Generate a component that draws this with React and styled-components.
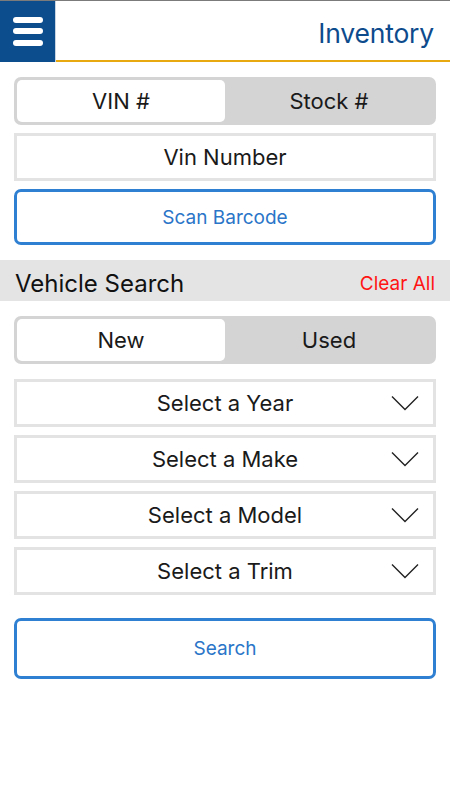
import React, { useState } from "react";
import styled, { createGlobalStyle } from "styled-components";

const Global = createGlobalStyle`
  html, body { margin: 0; padding: 0; background: #fff; }
  body { font-family: Inter, "Noto Sans", Roboto, sans-serif; -webkit-font-smoothing: antialiased; }
  * { box-sizing: border-box; }
`;

const Page = styled.div`
  width: 450px;
  min-height: 800px;
  background: #fff;
  display: flex;
  flex-direction: column;
`;

const Header = styled.header`
  display: flex;
  height: 62px;
  border-top: 1px solid #7b7b7b;
`;

const MenuButton = styled.button`
  width: 56px;
  height: 100%;
  background: #0c4d8e;
  border: none;
  border-right: 1px solid #c9d4e2;
  display: flex;
  align-items: center;
  justify-content: center;
  padding: 0 0 2px 0;
  cursor: pointer;
`;

const TitleBar = styled.div`
  flex: 1;
  display: flex;
  align-items: center;
  justify-content: flex-end;
  padding: 5px 16px 0 0;
  border-bottom: 2px solid #e8a80f;
`;

const Title = styled.h1`
  margin: 0;
  font-size: 26.5px;
  font-weight: 400;
  color: #0d4b8d;
  letter-spacing: -0.2px;
`;

const Section = styled.div`
  display: flex;
  flex-direction: column;
  gap: ${(p) => p.$gap || 8}px;
  padding: ${(p) => p.$pad || "15px 14px 0"};
`;

const Segmented = styled.div`
  display: flex;
  height: 48px;
  background: #d4d4d4;
  border-radius: 7px;
  padding: 3px;
`;

const Segment = styled.button`
  flex: 1;
  border: none;
  border-radius: 5px;
  background: ${(p) => (p.$active ? "#fff" : "transparent")};
  font-family: inherit;
  font-size: 22px;
  color: #1a1a1a;
  cursor: pointer;
  padding: 0;
`;

const Field = styled.div`
  height: ${(p) => p.$h || 48}px;
  border: 3px solid #e3e3e3;
  display: flex;
  align-items: center;
  justify-content: center;
  position: relative;
  font-size: 22px;
  color: #1a1a1a;
`;

const Chevron = styled.svg`
  position: absolute;
  right: 14px;
  top: 50%;
  transform: translateY(-50%);
`;

const OutlineButton = styled.button`
  height: ${(p) => p.$h}px;
  border: 3px solid #2f80d2;
  border-radius: 7px;
  background: #fff;
  color: #2a75c8;
  font-family: inherit;
  font-size: 19px;
  cursor: pointer;
  margin-top: ${(p) => p.$mt || 0}px;
`;

const Band = styled.div`
  margin-top: 15px;
  height: 41px;
  background: #e4e4e4;
  display: flex;
  align-items: center;
  justify-content: space-between;
  padding: 6px 15px 0 15px;
`;

const BandTitle = styled.h2`
  margin: 0;
  font-size: 24px;
  font-weight: 400;
  color: #111;
`;

const ClearAll = styled.button`
  border: none;
  background: none;
  padding: 0;
  font-family: inherit;
  font-size: 19px;
  color: #ff1414;
  cursor: pointer;
`;

const HamburgerIcon = () => (
  <svg width="32" height="32" viewBox="0 0 32 32">
    <rect x="1" y="2" width="30" height="6" rx="3" fill="#fff" />
    <rect x="1" y="13" width="30" height="6" rx="3" fill="#fff" />
    <rect x="1" y="25" width="30" height="6" rx="3" fill="#fff" />
  </svg>
);

const SelectField = ({ label }) => (
  <Field>
    {label}
    <Chevron width="28" height="16" viewBox="0 0 28 16">
      <polyline points="1,1.5 14,14.5 27,1.5" fill="none" stroke="#222" strokeWidth="1.4" />
    </Chevron>
  </Field>
);

export default function App() {
  const [mode, setMode] = useState("vin");
  const [cond, setCond] = useState("new");
  return (
    <Page>
      <Global />
      <Header>
        <MenuButton aria-label="Menu">
          <HamburgerIcon />
        </MenuButton>
        <TitleBar>
          <Title>Inventory</Title>
        </TitleBar>
      </Header>

      <Section>
        <Segmented>
          <Segment $active={mode === "vin"} onClick={() => setMode("vin")}>VIN #</Segment>
          <Segment $active={mode === "stock"} onClick={() => setMode("stock")}>Stock #</Segment>
        </Segmented>
        <Field>Vin Number</Field>
        <OutlineButton $h={56}>Scan Barcode</OutlineButton>
      </Section>

      <Band>
        <BandTitle>Vehicle Search</BandTitle>
        <ClearAll>Clear All</ClearAll>
      </Band>

      <Section>
        <Segmented>
          <Segment $active={cond === "new"} onClick={() => setCond("new")}>New</Segment>
          <Segment $active={cond === "used"} onClick={() => setCond("used")}>Used</Segment>
        </Segmented>
      </Section>

      <Section>
        <SelectField label="Select a Year" />
        <SelectField label="Select a Make" />
        <SelectField label="Select a Model" />
        <SelectField label="Select a Trim" />
        <OutlineButton $h={61} $mt={15}>Search</OutlineButton>
      </Section>
    </Page>
  );
}
